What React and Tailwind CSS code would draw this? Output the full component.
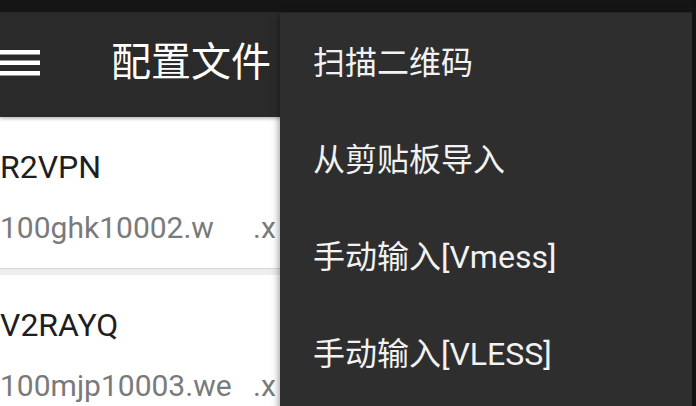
const profiles = [
  { name: "R2VPN", host: "100ghk10002.w", tail: ".x" },
  { name: "V2RAYQ", host: "100mjp10003.we", tail: ".x" },
]

const menuItems = ["扫描二维码", "从剪贴板导入", "手动输入[Vmess]", "手动输入[VLESS]"]

function ProfileCard({ profile }) {
  return (
    <div className="bg-white pt-[34px] pb-[25px]">
      <div className="text-[32px] leading-none text-[#1e1e1e] whitespace-nowrap">{profile.name}</div>
      <div className="mt-[30px] flex text-[30px] leading-none text-[#7a7a7a] whitespace-nowrap">
        <span className="w-[253px] shrink-0">{profile.host}</span>
        <span>{profile.tail}</span>
      </div>
    </div>
  )
}

export default function App() {
  return (
    <div className="relative w-[696px] h-[406px] overflow-hidden bg-white font-['Roboto','Noto_Sans_CJK_SC',sans-serif]">
      <div className="h-[12px] bg-[#151515]" />
      <header className="h-[105px] bg-[#2a2a2a] flex items-center pb-[4px] shadow-[0_2px_3px_rgba(0,0,0,0.25)] relative z-10">
        <svg width="40" height="26" viewBox="0 0 40 26" className="shrink-0">
          <rect x="0" y="0" width="40" height="4.5" fill="#fff" />
          <rect x="0" y="10.5" width="40" height="4.5" fill="#fff" />
          <rect x="0" y="21" width="40" height="4.5" fill="#fff" />
        </svg>
        <h1 className="ml-[71px] text-[40px] leading-none text-white whitespace-nowrap">配置文件</h1>
      </header>

      <div className="w-[280px] bg-[#efefef]">
        <ProfileCard profile={profiles[0]} />
        <div className="h-[7px] border-t border-[#d6d6d6] bg-[#eeeeee]" />
        <ProfileCard profile={profiles[1]} />
      </div>

      <div className="absolute left-[280px] top-[13px] w-[412px] h-[400px] bg-[#2e2e2e] shadow-[0_2px_8px_rgba(0,0,0,0.5)] z-20 pt-[1px]">
        {menuItems.map((item) => (
          <div key={item} className="h-[97px] flex items-center pl-[33px] text-[32px] leading-none text-[#f2f2f2] whitespace-nowrap">
            {item}
          </div>
        ))}
      </div>
      <div className="absolute right-0 top-0 w-[4px] h-full bg-[#121212] z-30" />
    </div>
  )
}
